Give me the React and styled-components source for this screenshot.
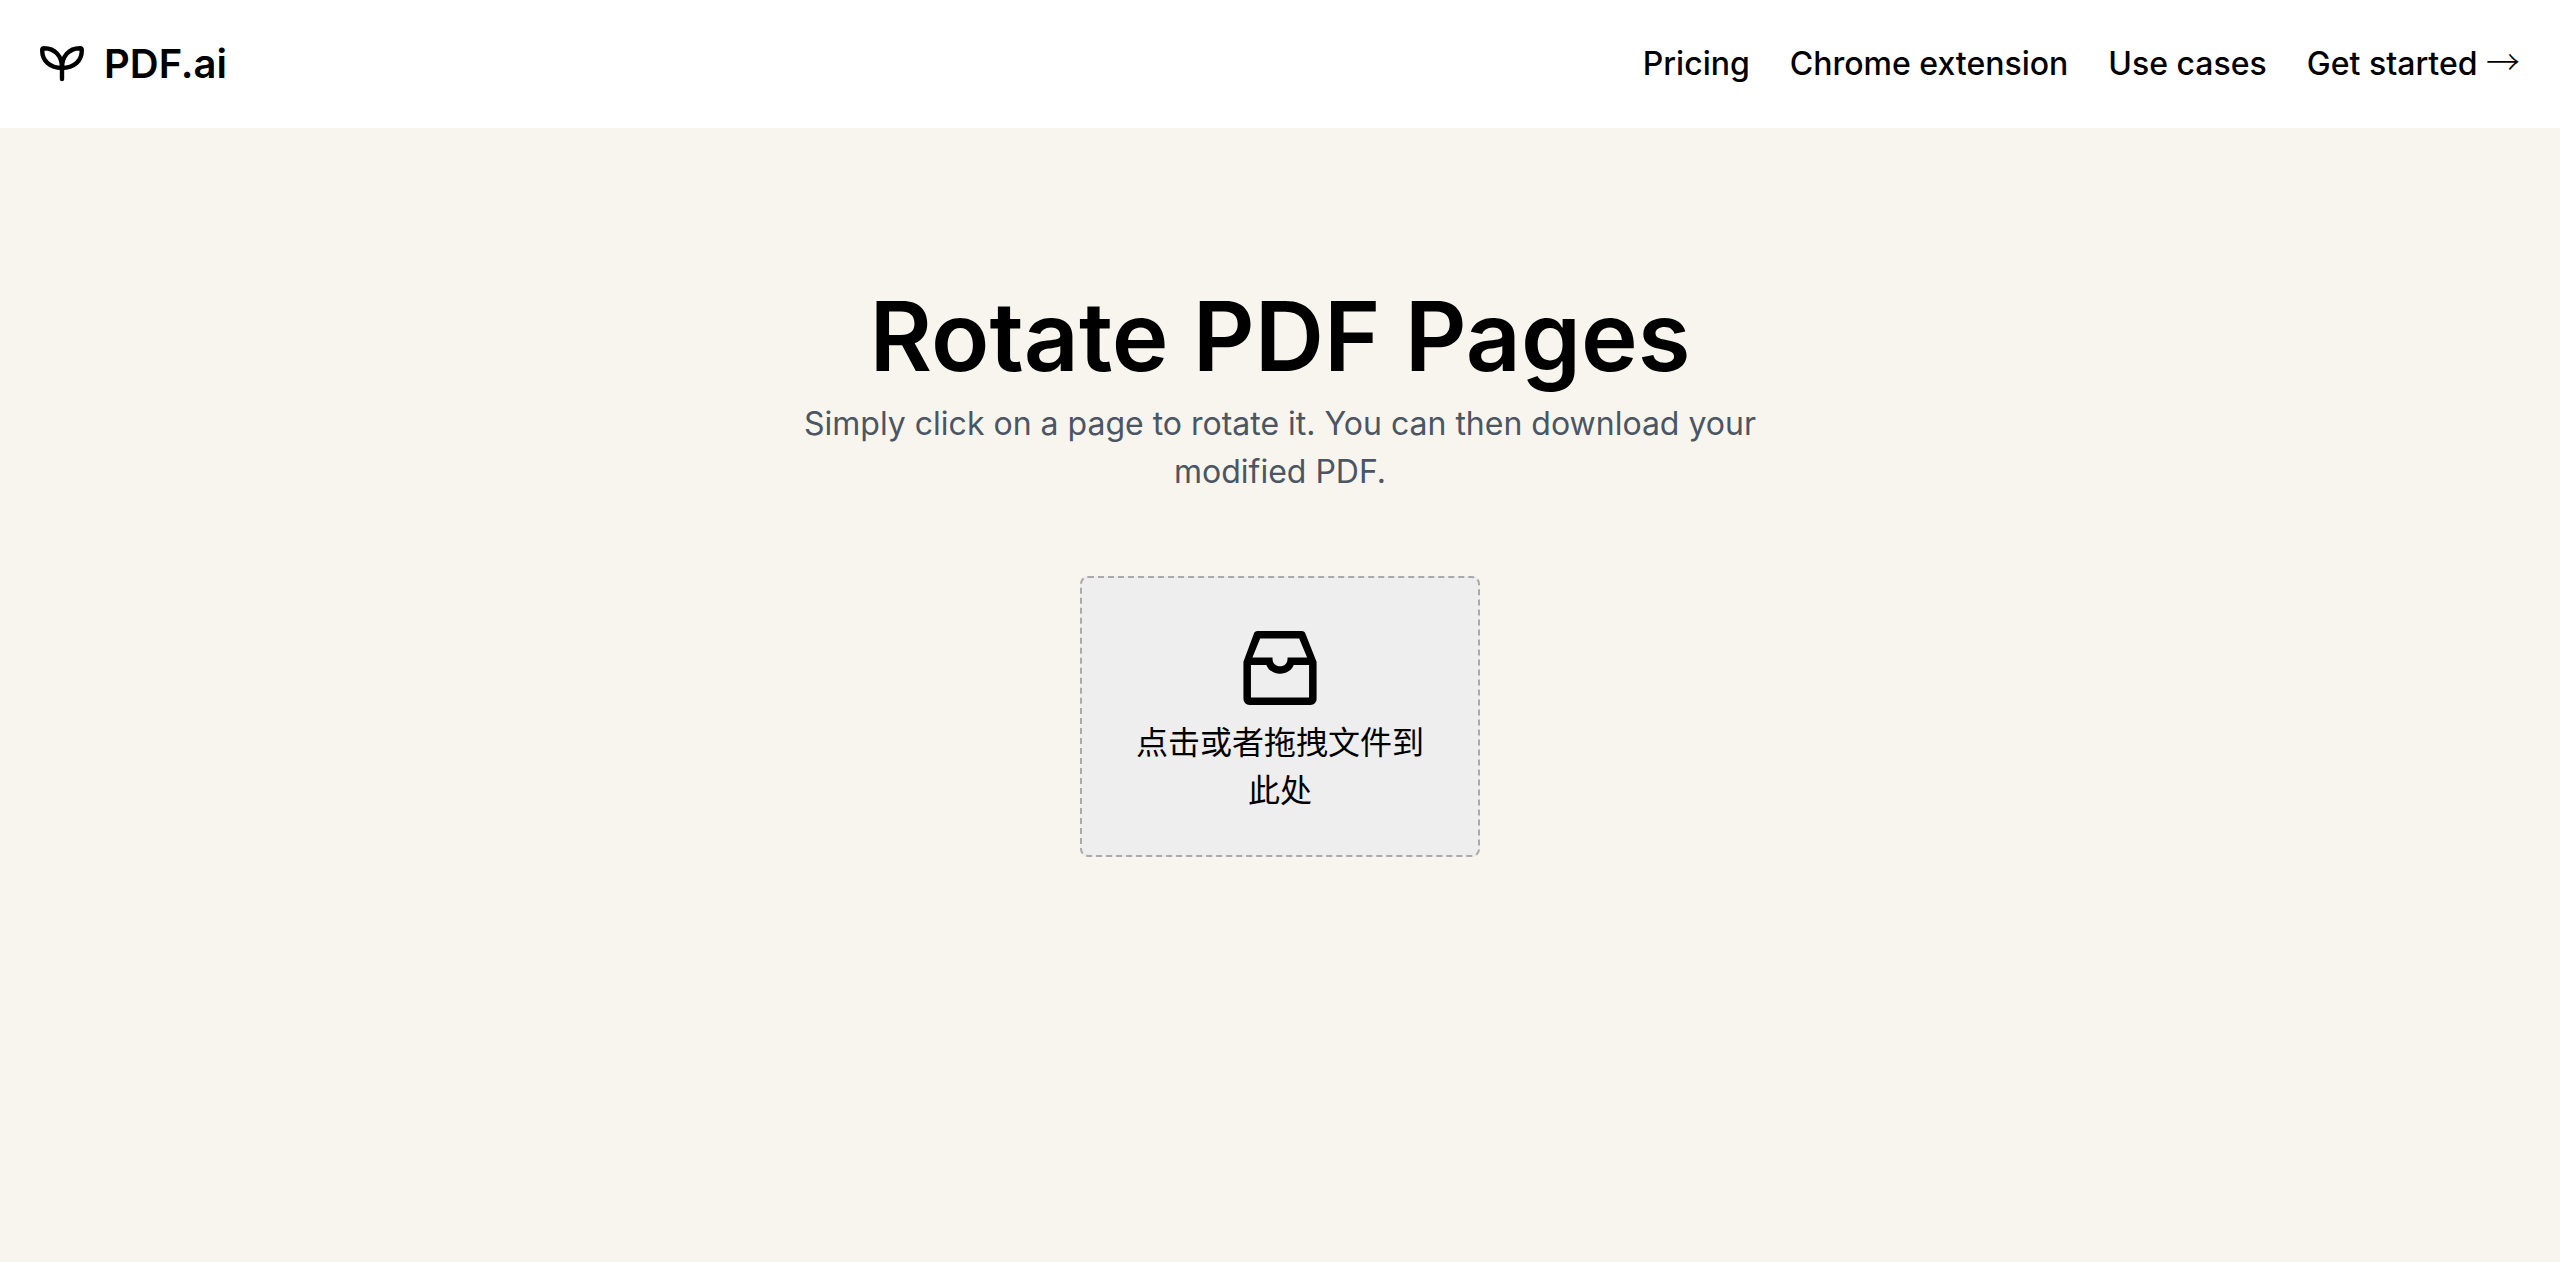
import React from "react";
import styled, { createGlobalStyle } from "styled-components";
import { AiOutlineInbox } from "react-icons/ai";

const GlobalStyle = createGlobalStyle`
  *, *::before, *::after { box-sizing: border-box; }
  html, body { margin: 0; padding: 0; }
  body {
    min-height: 100vh;
    background: #f8f5ee;
    color: #000;
    font-family: Inter, "Noto Sans CJK SC", sans-serif;
    font-size: 32px;
    line-height: 48px;
  }
`;

const Header = styled.header`
  display: flex;
  align-items: center;
  justify-content: space-between;
  padding: 36px 40px;
  background: #fff;
`;

const Brand = styled.a`
  display: flex;
  align-items: center;
  gap: 20px;
  color: inherit;
  font-size: 40px;
  font-weight: 600;
  line-height: 56px;
  text-decoration: none;
`;

const Nav = styled.nav`
  display: flex;
  gap: 40px;
`;

const NavLink = styled.a`
  color: inherit;
  font-weight: 500;
  text-decoration: none;
  white-space: nowrap;
`;

const Arrow = styled.span`
  font-family: "Noto Sans CJK SC", sans-serif;
  font-size: 34px;
  font-weight: 300;
  line-height: 1;
`;

const Main = styled.main`
  display: flex;
  flex-direction: column;
  align-items: center;
  padding: 160px 40px;
  text-align: center;
`;

const Title = styled.h1`
  margin: 0 0 16px;
  font-size: 96px;
  font-weight: 600;
  line-height: 96px;
`;

const Lead = styled.p`
  max-width: 1024px;
  margin: 0 0 80px;
  color: #4b5563;
`;

const DropZone = styled.button`
  display: flex;
  flex-direction: column;
  align-items: center;
  gap: 1px;
  width: 400px;
  max-width: 100%;
  padding: 40px;
  border: 2px dashed #aaa;
  border-radius: 8px;
  background: #eee;
  color: #000;
  font: inherit;
  cursor: pointer;
`;

const links = ["Pricing", "Chrome extension", "Use cases"];

function SproutLogo() {
  return (
    <svg
      width="44"
      height="36"
      viewBox="0 0 44 36"
      fill="none"
      stroke="currentColor"
      strokeWidth="4.4"
      strokeLinecap="round"
      strokeLinejoin="round"
      aria-hidden="true"
    >
      <path d="M22 33V22" />
      <path d="M22 22C10 22 2.2 15 2.2 4.2Q2.2 2.2 4.2 2.2C15 2.2 22 10 22 22Z" />
      <path d="M22 22C34 22 41.8 15 41.8 4.2Q41.8 2.2 39.8 2.2C29 2.2 22 10 22 22Z" />
    </svg>
  );
}

export default function App() {
  return (
    <>
      <GlobalStyle />
      <Header>
        <Brand href="#">
          <SproutLogo />
          PDF.ai
        </Brand>
        <Nav>
          {links.map((label) => (
            <NavLink href="#" key={label}>{label}</NavLink>
          ))}
          <NavLink href="#">
            Get started <Arrow>→</Arrow>
          </NavLink>
        </Nav>
      </Header>
      <Main>
        <Title>Rotate PDF Pages</Title>
        <Lead>
          Simply click on a page to rotate it. You can then download your
          modified PDF.
        </Lead>
        <DropZone type="button">
          <AiOutlineInbox size={100} aria-hidden="true" />
          <span lang="zh-CN">点击或者拖拽文件到此处</span>
        </DropZone>
      </Main>
    </>
  );
}
